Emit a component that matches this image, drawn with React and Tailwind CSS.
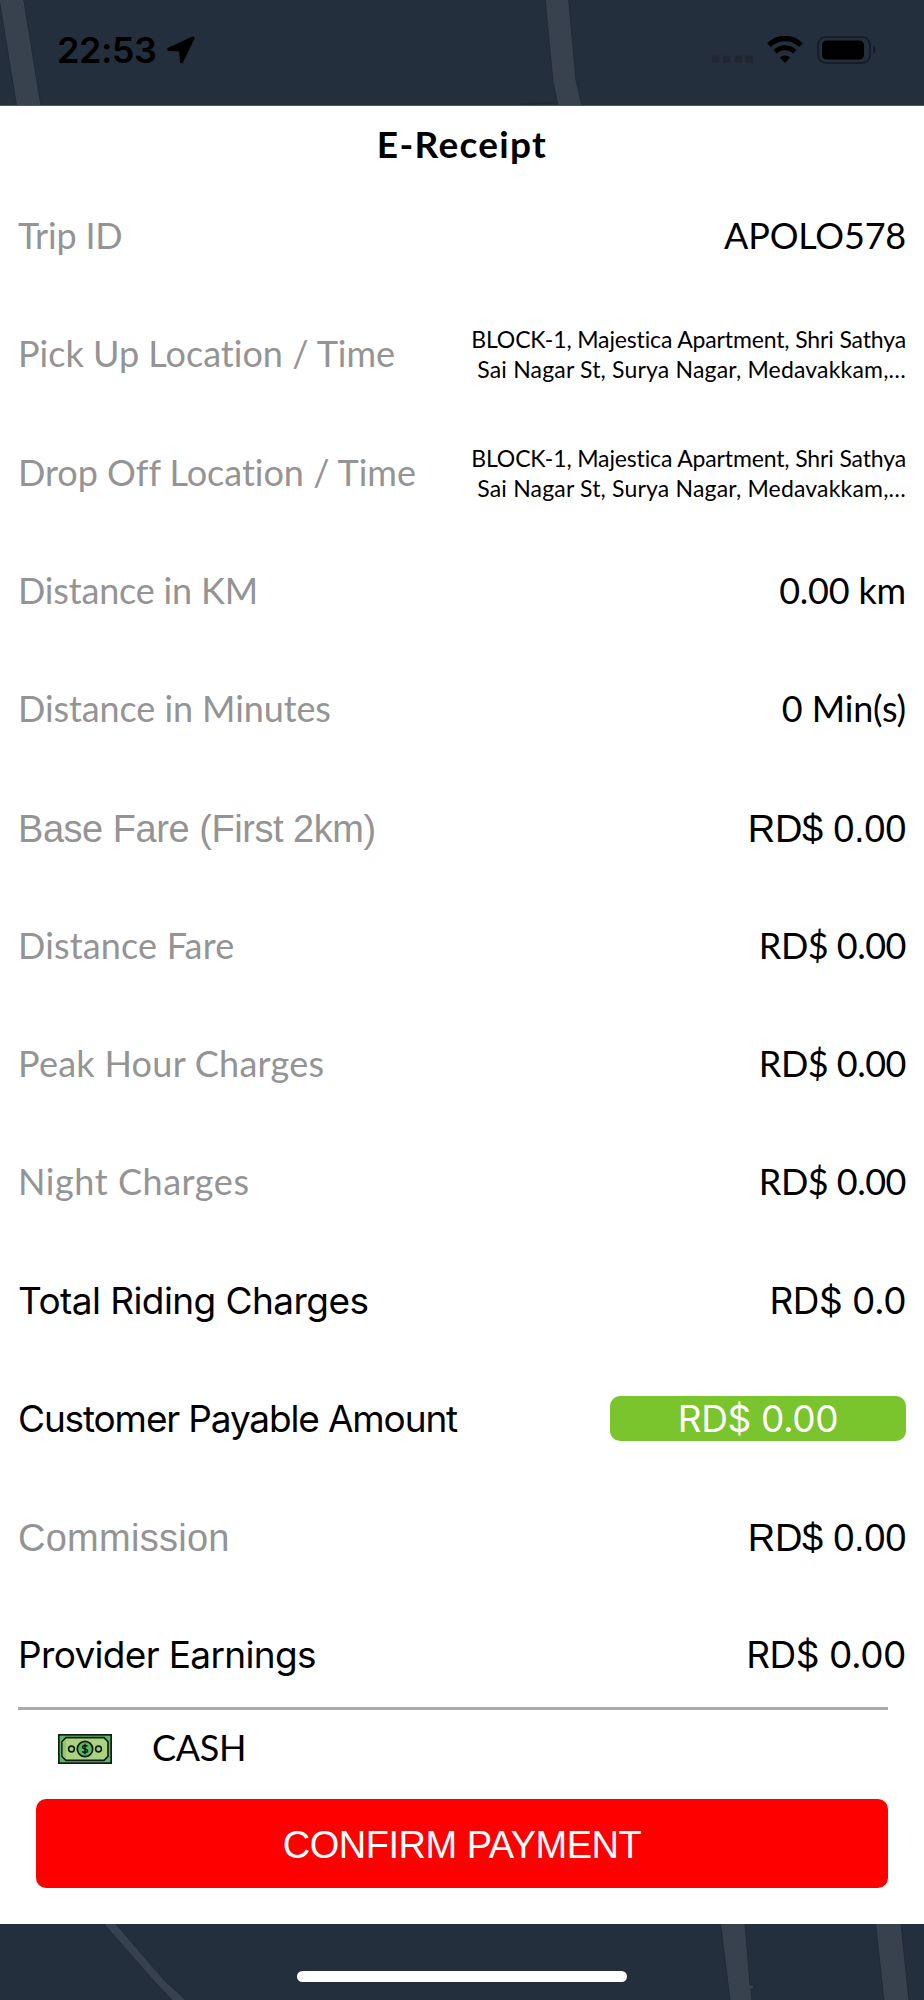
// font stacks used by the receipt rows
const fonts = {
  book: "font-['Lato',sans-serif] text-[36px] pb-[2px]",
  helvetica: "font-['Liberation_Sans',sans-serif] text-[38px] pt-[4px]",
  system: "font-['Inter',sans-serif] text-[37px]",
};

const address = ['BLOCK-1, Majestica Apartment, Shri Sathya', 'Sai Nagar St, Surya Nagar, Medavakkam,…'];

const rows = [
  { label: 'Trip ID', labelSpacing: 'tracking-[-0.2px]', value: 'APOLO578', valueSpacing: 'tracking-[-0.2px]', font: 'book' },
  { label: 'Pick Up Location / Time', labelSpacing: 'tracking-[0.02px]', address, font: 'book' },
  { label: 'Drop Off Location / Time', labelSpacing: 'tracking-[-0.01px]', address, font: 'book' },
  { label: 'Distance in KM', labelSpacing: 'tracking-[-0.18px]', value: '0.00 km', valueSpacing: 'tracking-[-0.2px]', font: 'book' },
  { label: 'Distance in Minutes', labelSpacing: 'tracking-[-0.09px]', value: '0 Min(s)', valueSpacing: 'tracking-[-0.15px]', font: 'book' },
  { label: 'Base Fare (First 2km)', labelSpacing: 'tracking-[-0.46px]', value: 'RD$ 0.00', valueSpacing: 'tracking-[-0.29px]', font: 'helvetica' },
  { label: 'Distance Fare', labelSpacing: 'tracking-[0.16px]', value: 'RD$ 0.00', valueSpacing: 'tracking-[-0.5px]', font: 'book' },
  { label: 'Peak Hour Charges', labelSpacing: 'tracking-[0.27px]', value: 'RD$ 0.00', valueSpacing: 'tracking-[-0.5px]', font: 'book' },
  { label: 'Night Charges', labelSpacing: 'tracking-[0.56px]', value: 'RD$ 0.00', valueSpacing: 'tracking-[-0.5px]', font: 'book' },
  { label: 'Total Riding Charges', labelSpacing: 'tracking-[-0.57px]', value: 'RD$ 0.0', valueSpacing: 'tracking-[-0.5px]', font: 'system', strong: true },
  { label: 'Customer Payable Amount', labelSpacing: 'tracking-[-1.15px]', value: 'RD$ 0.00', valueSpacing: 'tracking-[-0.4px]', font: 'system', strong: true, badge: true },
  { label: 'Commission', labelSpacing: 'tracking-[0.27px]', value: 'RD$ 0.00', valueSpacing: 'tracking-[-0.29px]', font: 'helvetica' },
  { label: 'Provider Earnings', labelSpacing: 'tracking-[-0.66px]', value: 'RD$ 0.00', valueSpacing: 'tracking-[-0.45px]', font: 'system', strong: true },
];

const StatusBar = () => (
  <div className="relative h-[106px] border-b border-[#4f5863] bg-[#242f3d]">
    {/* roads of the map behind the sheet */}
    <svg className="absolute inset-0" width="924" height="105" viewBox="0 0 924 105">
      <path d="M-1 -2H23.5L41 106H16.5L-1 -2Z" fill="#38424e" stroke="#202b38" />
      <path d="M545 -2H568.5L576 80L582 106H558L553 82Z" fill="#38424e" stroke="#202b38" />
      <path d="M520 104.5L557 102.5" stroke="#1f2935" strokeWidth="1.5" />
    </svg>
    <div className="relative flex items-center justify-between pt-[25px] pl-[57px] pr-[47px]">
      <div className="flex items-center gap-[11px]">
        <span className="font-['Inter',sans-serif] text-[36px] leading-[50px] font-semibold tracking-[-0.49px] text-black">22:53</span>
        <svg width="28" height="28" viewBox="0 0 28 28" fill="#000" stroke="#000" strokeWidth="3.4" strokeLinejoin="round">
          <path d="M25.8 2.2L2 13.2L13.8 13.8L14.6 25.6Z" />
        </svg>
      </div>
      <div className="flex items-center">
        <svg width="42" height="28" viewBox="0 0 42 28" fill="#1f2733">
          <rect x="0" y="19.5" width="7.5" height="7.5" rx="2" />
          <rect x="11" y="19.5" width="7.5" height="7.5" rx="2" />
          <rect x="22.5" y="19.5" width="7.5" height="7.5" rx="2" />
          <rect x="33.5" y="19.5" width="7.5" height="7.5" rx="2" />
        </svg>
        <svg className="ml-[13px]" width="36" height="28" viewBox="0 0 36 28">
          <path d="M2 9.2A22.5 22.5 0 0 1 34 9.2" fill="none" stroke="#000" strokeWidth="5.4" />
          <path d="M8.2 15.8A14 14 0 0 1 27.8 15.8" fill="none" stroke="#000" strokeWidth="5" />
          <path d="M18 27L12.8 21.4A8 8 0 0 1 23.2 21.4Z" fill="#000" />
        </svg>
        <svg className="ml-[14px]" width="60" height="28" viewBox="0 0 60 28">
          <rect x="1" y="1" width="52" height="26" rx="8" fill="none" stroke="#161d26" strokeWidth="2" />
          <rect x="5" y="4.5" width="42" height="19" rx="4.5" fill="#000" />
          <path d="M56 9.5C59.3 11 59.3 17 56 18.5Z" fill="#161d26" />
        </svg>
      </div>
    </div>
  </div>
);

const ReceiptRow = ({ row }) => (
  <div className="flex h-[118.25px] items-center justify-between whitespace-nowrap">
    <span className={`${fonts[row.font]} ${row.labelSpacing} ${row.strong ? 'text-black' : 'text-[#949494]'}`}>{row.label}</span>
    {row.address ? (
      <div className="text-right font-['Lato',sans-serif] text-[23px] leading-[30px] text-black">
        <p className="tracking-[-0.14px]">{row.address[0]}</p>
        <p className="tracking-[0.18px]">{row.address[1]}</p>
      </div>
    ) : row.badge ? (
      <span className={`${fonts[row.font]} ${row.valueSpacing} h-[45px] w-[296px] rounded-[10px] bg-[#7ac42d] text-center leading-[45px] text-white`}>{row.value}</span>
    ) : (
      <span className={`${fonts[row.font]} ${row.valueSpacing} text-black`}>{row.value}</span>
    )}
  </div>
);

const CashIcon = () => (
  <svg width="54" height="30" viewBox="0 0 54 30">
    <rect x="0" y="0" width="54" height="30" fill="#101c18" />
    <rect x="1.7" y="1.7" width="50.6" height="26.6" fill="#5cb85f" />
    <path d="M8 3.6H46L50 7.6V22.4L46 26.4H8L4 22.4V7.6Z" fill="#abd37f" stroke="#101c18" strokeWidth="1.6" />
    <path d="M4.8 8.2L8 5V25L4.8 22Z" fill="#94c472" />
    <circle cx="27" cy="15" r="7.7" fill="#5cb85f" stroke="#101c18" strokeWidth="1.7" />
    <circle cx="13.5" cy="15" r="2.9" fill="#abd37f" stroke="#101c18" strokeWidth="1.6" />
    <circle cx="40.5" cy="15" r="2.9" fill="#abd37f" stroke="#101c18" strokeWidth="1.6" />
    <path d="M29.5 12.4C28.8 11.2 24.6 11 24.6 13.2C24.6 15.4 29.6 14.4 29.6 16.8C29.6 19 25.2 19 24.3 17.4M27 9.8V20.2" fill="none" stroke="#101c18" strokeWidth="1.5" />
  </svg>
);

const BottomBar = () => (
  <div className="relative flex h-[76px] justify-center bg-[#242f3d]">
    <svg className="absolute inset-0" width="924" height="76" viewBox="0 0 924 76">
      <path d="M103 -1H115L165 57L187 77H173L154 57Z" fill="#38424e" stroke="#202b38" />
      <path d="M720.5 -1H745L750 61H753.5V65H751L752 77H730Z" fill="#38424e" stroke="#202b38" />
      <path d="M875.5 -1H901L909 77H884Z" fill="#38424e" stroke="#202b38" />
    </svg>
    <div className="relative mt-[47px] h-[11px] w-[330px] rounded-full bg-white" />
  </div>
);

export const Receipt = () => {
  return (
    <div className="flex h-[1818px] flex-col bg-white">
      <h1 className="h-[71px] pt-[2px] text-center font-['Lato',sans-serif] text-[37px] leading-[71px] font-bold tracking-[1.3px] text-black">
        E-Receipt
      </h1>
      <div className="px-[18px]">
        {rows.map((row) => (
          <ReceiptRow key={row.label} row={row} />
        ))}
      </div>
      <div className="-mt-[7px] mr-9 ml-[18px] h-[3px] shrink-0 bg-[#aaaaaa]" />
      <div className="flex h-[89px] shrink-0 items-center gap-10 pb-[11px] pl-[58px]">
        <CashIcon />
        <span className="pb-[4px] font-['Lato',sans-serif] text-[36px] tracking-[-0.32px] text-black">CASH</span>
      </div>
      <button className="mx-9 h-[89px] shrink-0 rounded-[10px] bg-[#ff0000] pt-[3px] font-['Liberation_Sans',sans-serif] text-[38px] tracking-[-0.51px] text-white">
        CONFIRM PAYMENT
      </button>
    </div>
  );
};

const App = () => {
  return (
    <div className="h-[2000px] w-[924px] overflow-hidden">
      <StatusBar />
      <Receipt />
      <BottomBar />
    </div>
  );
};

export default App;
